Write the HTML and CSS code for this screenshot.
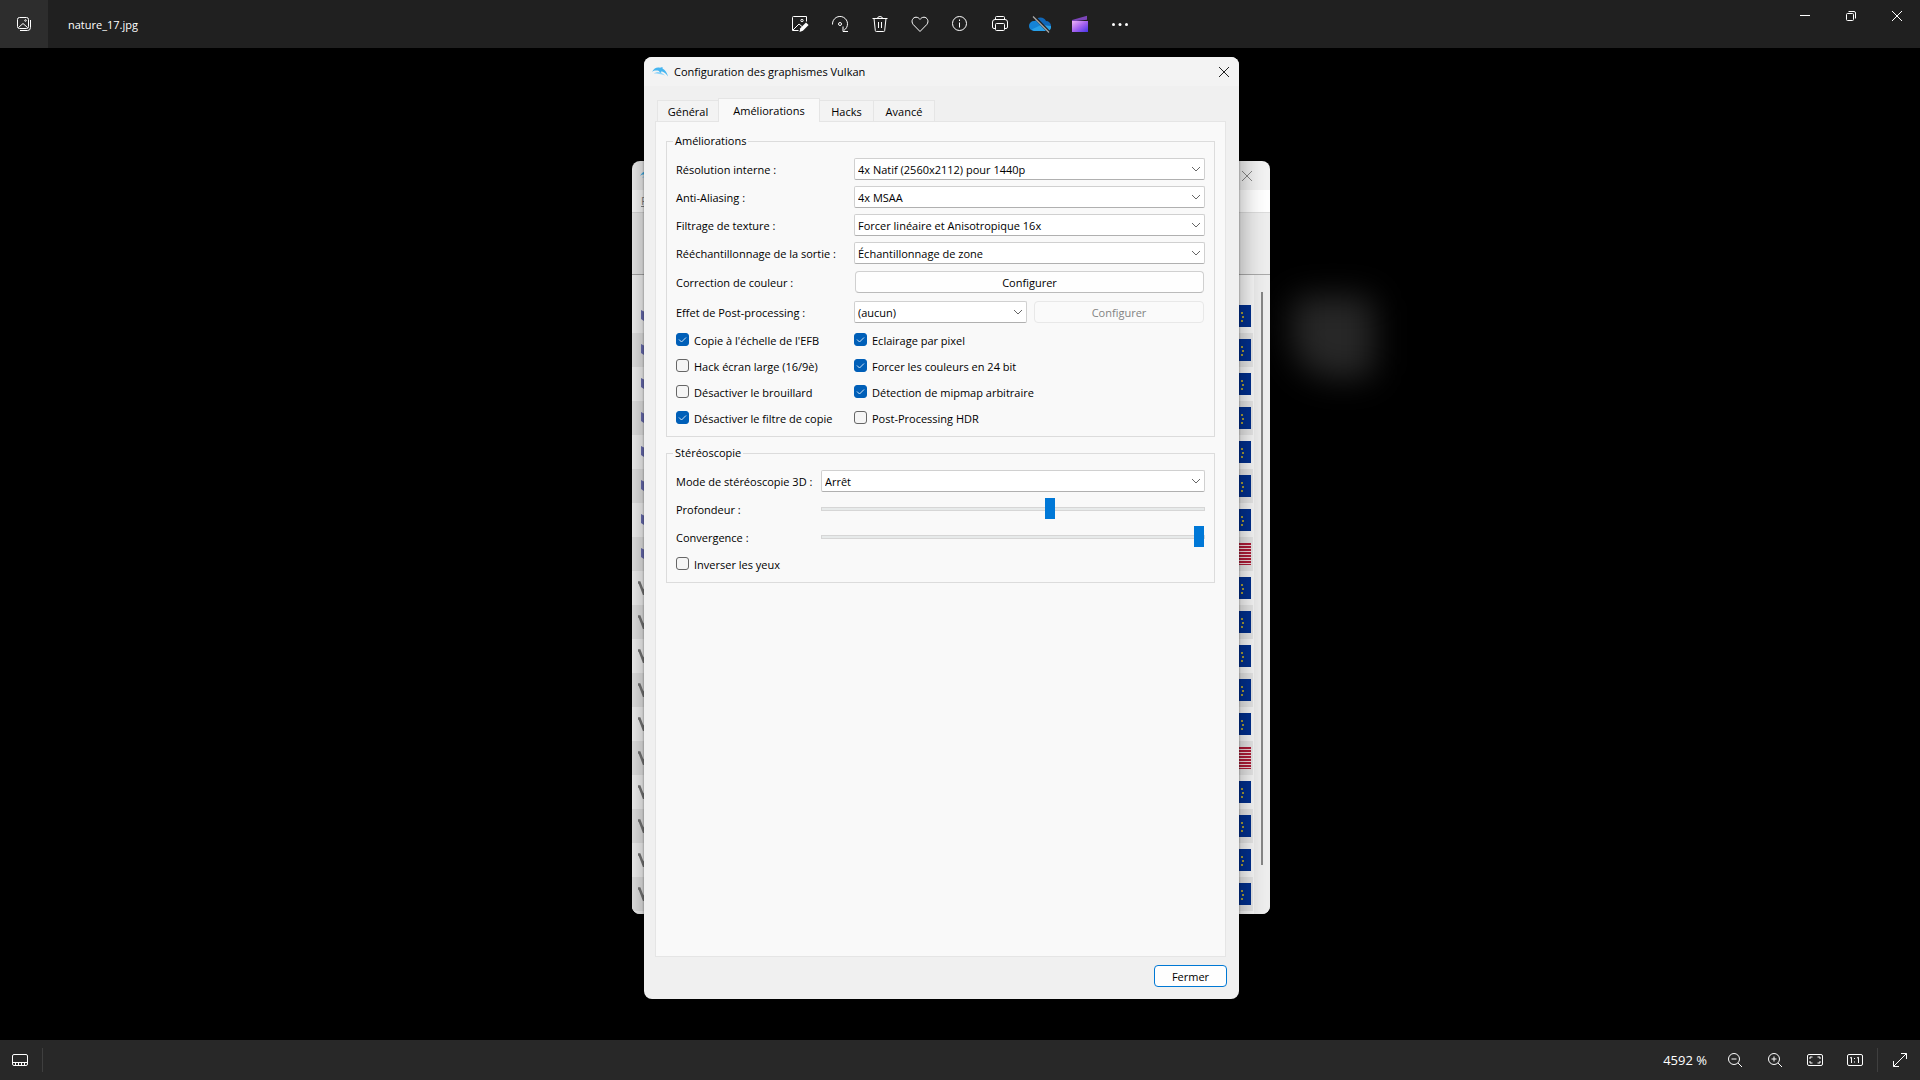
FILE: index.html
```
<!DOCTYPE html>
<html lang="fr">
<head>
  <meta charset="UTF-8">
  <meta name="viewport" content="width=device-width, initial-scale=1.0">
  <title>nature_17.jpg</title>
  <link rel="stylesheet" href="styles.css">
</head>
<body>

  <!-- Barre du haut -->
  <header class="topbar">
    <div class="topbar-left">
      <button class="gallery-btn" aria-label="Galerie">
        <svg width="16" height="16" viewBox="0 0 16 16"><rect x="1.5" y="1.5" width="11" height="11" rx="2"/><path d="M4 14.5h7.5a3 3 0 0 0 3-3V4M2.5 11.5L7 7.5l4.5 4"/><circle cx="9.5" cy="4.5" r=".8"/></svg>
      </button>
      <span class="filename">nature_17.jpg</span>
    </div>
    <nav class="tools">
      <button aria-label="Modifier">
        <svg width="18" height="18" viewBox="0 0 18 18"><path d="M15.5 6.5v-5h-13a1 1 0 0 0-1 1v13h6M2 15l6-6 3 2.500"/><circle cx="11" cy="5.500" r="1.200"/><path class="solid" d="M8.500 17l.8-3.800L15 7.500l2.600 2.600-5.700 5.700z"/></svg>
      </button>
      <button aria-label="Rotation">
        <svg width="18" height="18" viewBox="0 0 18 18"><path d="M1.500 9.500V9a7.500 7.500 0 1 1 11.500 6.300M12 11.500V16.500h5"/><circle cx="9" cy="9" r="1.500"/></svg>
      </button>
      <button aria-label="Supprimer">
        <svg width="18" height="18" viewBox="0 0 18 18"><path d="M1.500 3.500h15M6.500 3.500a2.500 2 0 0 1 5 0M3 3.500l1.300 12a1 1 0 0 0 1 1h7.400a1 1 0 0 0 1-1L15 3.500M7.500 7v6M10.500 7v6"/></svg>
      </button>
      <button aria-label="Favori">
        <svg width="18" height="18" viewBox="0 0 18 18"><path d="M9 16.500L2.200 9.500C-.5 6 2 2.200 5 2.200c2 0 3 1 4 2.200 1-1.200 2-2.200 4-2.200 3 0 5.500 3.800 2.800 7.300z"/></svg>
      </button>
      <button aria-label="Informations">
        <svg width="18" height="18" viewBox="0 0 18 18"><circle cx="8.500" cy="8.500" r="7"/><path d="M8.500 7.500v5M8.500 4.500V6"/></svg>
      </button>
      <button aria-label="Imprimer">
        <svg width="18" height="18" viewBox="0 0 18 18"><path d="M4.500 4.500v-2a1 1 0 0 1 1-1h7a1 1 0 0 1 1 1v2M4 13.500H3a1.500 1.500 0 0 1-1.500-1.500V7A2.500 2.500 0 0 1 4 4.500h10A2.500 2.500 0 0 1 16.500 7v5a1.500 1.500 0 0 1-1.500 1.500h-1"/><rect x="4.500" y="8.500" width="9" height="7" rx="1"/></svg>
      </button>
      <button aria-label="OneDrive">
        <svg class="color" width="22" height="18" viewBox="0 0 22 18"><path fill="#1067b8" d="M6 6a6 6 0 0 1 11 0 5 5 0 0 1 5 5l-10 2z"/><path fill="#1583d6" d="M5 16a5 5 0 0 1 0-10c2-.3 4 .5 5 1.500L14 12l-9 4z"/><path fill="#28a0e8" d="M2.500 14.500L12 10l10 1a4 4 0 0 1-4 5H5z"/><path stroke="#202020" stroke-width="3" d="M5 1.500L19.500 16.500"/><path stroke="#aaa" stroke-width="1.300" d="M4 1.500L20 17.500"/></svg>
      </button>
      <button aria-label="Clipchamp">
        <svg class="color" width="18" height="18" viewBox="0 0 18 18"><defs><linearGradient id="clip" x2="1" y2="1"><stop stop-color="#efb5f5"/><stop offset=".5" stop-color="#a663ef"/><stop offset="1" stop-color="#4534e8"/></linearGradient></defs><path fill="#7b45b8" d="M1 5l15-4.200v4L1 6.500z"/><path fill="url(#clip)" d="M1 6h16v11H1z"/></svg>
      </button>
      <button aria-label="Plus">
        <svg width="18" height="18" viewBox="0 0 18 18"><circle class="solid" cx="2.500" cy="9.500" r="1.500"/><circle class="solid" cx="9" cy="9.500" r="1.500"/><circle class="solid" cx="15.500" cy="9.500" r="1.500"/></svg>
      </button>
    </nav>
    <div class="window-controls">
      <button aria-label="Réduire"><svg width="12" height="12" viewBox="0 0 12 12"><path d="M1 5.500h10"/></svg></button>
      <button aria-label="Restaurer"><svg width="12" height="12" viewBox="0 0 12 12"><rect x="1.500" y="3.500" width="7" height="7" rx="1"/><path d="M3.500 1.500H9a1.500 1.500 0 0 1 1.500 1.500v5.500"/></svg></button>
      <button aria-label="Fermer la fenêtre"><svg width="12" height="12" viewBox="0 0 12 12"><path d="M1 1l10 10M11 1L1 11"/></svg></button>
    </div>
  </header>

  <main class="stage">

    <!-- Liste des jeux, derrière -->
    <section class="window back">
      <div class="back-title">
        <svg class="dolphin" width="16" height="10" viewBox="0 0 16 10"><use href="#dolphin"/></svg>
        <svg class="back-close" width="12" height="12" viewBox="0 0 12 12"><path d="M1 1l10 10M11 1L1 11"/></svg>
      </div>
      <div class="back-menu"><u>F</u></div>
      <div class="back-tools"></div>
      <div class="back-list">
        <table class="games" id="games"></table>
        <div class="scroll"></div>
      </div>
    </section>

    <!-- Configuration graphique -->
    <section class="window dialog">
      <div class="dialog-title">
        <svg class="dolphin" width="16" height="10" viewBox="0 0 16 10"><g id="dolphin"><path fill="#45b5f0" d="M0 5C2 1 5 0 8 .8L10.500 0v1.500C13 3 15 5.500 16 9.500 14 6.500 12 4.800 9.500 4.200L8.500 7 7 4C4 3.200 2 3.500 0 5z"/><path fill="#8ed4fa" d="M2 6.500c3-2.500 7-2 11 2C9 7 5 6.500 2 6.500z"/></g></svg>
        <h1>Configuration des graphismes Vulkan</h1>
        <button class="dialog-close" aria-label="Fermer le dialogue"><svg width="12" height="12" viewBox="0 0 12 12"><path d="M1 1l10 10M11 1L1 11"/></svg></button>
      </div>
      <div class="tabs">
        <button class="tab">Général</button>
        <button class="tab active">Améliorations</button>
        <button class="tab">Hacks</button>
        <button class="tab">Avancé</button>
      </div>
      <div class="pane">
        <fieldset>
          <legend>Améliorations</legend>
          <div class="rows">
            <label for="res">Résolution interne :</label>
            <select id="res"><option>4x Natif (2560x2112) pour 1440p</option></select>
            <label for="aa">Anti-Aliasing :</label>
            <select id="aa"><option>4x MSAA</option></select>
            <label for="filter">Filtrage de texture :</label>
            <select id="filter"><option>Forcer linéaire et Anisotropique 16x</option></select>
            <label for="resample">Rééchantillonnage de la sortie :</label>
            <select id="resample"><option>Échantillonnage de zone</option></select>
            <label class="tall" for="color">Correction de couleur :</label>
            <button class="btn wide" id="color">Configurer</button>
            <label class="tall" for="post">Effet de Post-processing :</label>
            <div class="pair">
              <select id="post"><option>(aucun)</option></select>
              <button class="btn" disabled>Configurer</button>
            </div>
          </div>
          <div class="checks">
            <label><input type="checkbox" checked>Copie à l'échelle de l'EFB</label>
            <label><input type="checkbox" checked>Eclairage par pixel</label>
            <label><input type="checkbox">Hack écran large (16/9è)</label>
            <label><input type="checkbox" checked>Forcer les couleurs en 24 bit</label>
            <label><input type="checkbox">Désactiver le brouillard</label>
            <label><input type="checkbox" checked>Détection de mipmap arbitraire</label>
            <label><input type="checkbox" checked>Désactiver le filtre de copie</label>
            <label><input type="checkbox">Post-Processing HDR</label>
          </div>
        </fieldset>
        <fieldset>
          <legend>Stéréoscopie</legend>
          <div class="rows stereo">
            <label for="mode">Mode de stéréoscopie 3D :</label>
            <select id="mode"><option>Arrêt</option></select>
            <label for="depth">Profondeur :</label>
            <input type="range" id="depth" min="0" max="100" value="60">
            <label for="conv">Convergence :</label>
            <input type="range" id="conv" min="0" max="100" value="100">
            <label class="invert"><input type="checkbox">Inverser les yeux</label>
          </div>
        </fieldset>
      </div>
      <div class="dialog-footer">
        <button class="btn primary">Fermer</button>
      </div>
    </section>
  </main>

  <!-- Barre du bas -->
  <footer class="bottombar">
    <button aria-label="Pellicule">
      <svg width="18" height="14" viewBox="0 0 18 14"><rect x="1.500" y="1.500" width="15" height="11" rx="1.500"/><path d="M1.500 9.500h15M4.500 10v2M7.500 10v2M10.500 10v2M13.500 10v2"/></svg>
    </button>
    <span class="sep"></span>
    <span class="zoom">4592 %</span>
    <button aria-label="Zoom arrière"><svg width="16" height="16" viewBox="0 0 16 16"><circle cx="7" cy="7" r="5.500"/><path d="M4.500 7h5M11 11l4 4"/></svg></button>
    <button aria-label="Zoom avant"><svg width="16" height="16" viewBox="0 0 16 16"><circle cx="7" cy="7" r="5.500"/><path d="M4.500 7h5M7 4.500v5M11 11l4 4"/></svg></button>
    <button aria-label="Ajuster"><svg width="18" height="14" viewBox="0 0 18 14"><rect x="1.500" y="1.500" width="15" height="11" rx="1.500"/><path d="M4 6V4h2.500M11.500 4H14v2M14 8v2h-2.500M6.500 10H4V8"/></svg></button>
    <button aria-label="Taille réelle"><svg width="18" height="14" viewBox="0 0 18 14"><rect x="1.500" y="1.500" width="15" height="11" rx="1.500"/><path d="M4 5l1.500-.7V10M11 5l1.500-.7V10M8.500 5v1M8.500 8.500v1"/></svg></button>
    <span class="sep"></span>
    <button class="full" aria-label="Plein écran"><svg width="16" height="16" viewBox="0 0 16 16"><path d="M1.500 14.500l13-13M9 1.500h5.500V7M1.500 9v5.500H7"/></svg></button>
  </footer>

  <script src="games.js"></script>
</body>
</html>
```
FILE: games.js
```
// w = Wii, g = GameCube ; les lignes 8 et 14 sont des jeux US
const games = document.getElementById('games');
const cube = '<svg width="12" height="14" viewBox="0 0 12 14"><path fill="#6b6fb5" d="M0 1l6 3 6-3v9l-6 4-6-4z"/></svg>';
const wii = '<svg width="24" height="14" viewBox="0 0 24 14"><path fill="none" stroke="#777" stroke-width="2.500" d="M0 1.500h1.500l4 10.500 4-10.500 4 10.500 4-10.500"/></svg>';

for (let i = 1; i <= 18; i++) {
  const row = games.insertRow();
  const type = row.insertCell();
  type.className = i <= 8 ? 'type g' : 'type w';
  type.innerHTML = i <= 8 ? cube : wii;
  const region = row.insertCell();
  region.className = 'region';
  region.innerHTML = `<span class="flag ${i === 8 || i === 14 ? 'us' : 'eu'}"></span>`;
}
```
FILE: styles.css
```
* {
  box-sizing: border-box;
  margin: 0;
  padding: 0;
}
body {
  height: 100vh;
  display: grid;
  grid-template-rows: 48px 1fr 40px;
  overflow: hidden;
  background: #000;
  color: #000;
  font-family: "Open Sans", "Noto Sans", sans-serif;
  font-size: 11px;
}
button, select, input { font: inherit; color: inherit; }
button { border: none; background: none; }
svg { display: block; fill: none; stroke: currentColor; }
svg .solid { fill: currentColor; stroke: none; }
svg.color { stroke: none; }

/* barre du haut */
.topbar { display: grid; grid-template-columns: 1fr auto 1fr; background: #202020; color: #fff; }
.topbar button, .bottombar button { display: flex; align-items: center; justify-content: center; }
.topbar-left { display: flex; align-items: center; gap: 20px; }
.gallery-btn { width: 48px; height: 48px; background: #2d2d2d; }
.tools { display: flex; }
.tools button { width: 40px; height: 48px; }
.window-controls { display: flex; justify-content: flex-end; }
.window-controls button { width: 46px; height: 32px; }

/* zone de travail */
.stage { position: relative; overflow: hidden; }
.stage::before { content: ""; position: absolute; left: 1292px; top: 248px; width: 82px; height: 82px; border-radius: 12px 12px 12px 40px; background: #272727; filter: blur(16px); }
.window { position: absolute; display: flex; flex-direction: column; border-radius: 8px; overflow: hidden; }
.dolphin { stroke: none; }

.back { inset: 113px 650px 126px 632px; background: #f3f3f3; }
.back-title { height: 29px; display: flex; align-items: center; justify-content: space-between; padding: 0 17px 0 8px; color: #888; flex: none; }
.back-menu { height: 23px; flex: none; padding: 3px 9px; background: #fff; color: #888; border-bottom: 1px solid #ddd; }
.back-tools { height: 62px; flex: none; background: #eee; border-bottom: 1px solid #aaa; }
.back-list { flex: 1; display: flex; justify-content: space-between; padding-right: 7px; overflow: hidden; background: linear-gradient(to left, #eee 16px, #f8f8f8 16px); }
.games { flex: 1; align-self: flex-start; margin-top: 24px; margin-right: 8px; border-collapse: collapse; }
.games tr { height: 34px; }
.games tr:nth-child(even) { background: #e8e8e8; }
.games td { vertical-align: middle; }
.games svg { stroke: none; }
.type.g { padding-left: 9px; }
.type.w { padding-left: 6px; }
.region { text-align: right; padding-right: 2px; }
.flag { display: inline-block; vertical-align: middle; width: 33px; height: 22px; }
.flag.eu { background: linear-gradient(#a69c3c, #a69c3c) 23px 7px / 2px 2px no-repeat, linear-gradient(#a69c3c, #a69c3c) 24px 11px / 2px 2px no-repeat, linear-gradient(#a69c3c, #a69c3c) 23px 15px / 2px 2px no-repeat, #002f8e; }
.flag.us { background: repeating-linear-gradient(#b01c38 0 2px, #f0d8dc 2px 3px); }
.scroll { width: 2px; margin: 17px 0 49px; background: #868686; }

/* boîte de dialogue */
.dialog { inset: 9px 681px 41px 644px; background: #f0f0f0; box-shadow: 0 8px 28px rgba(0, 0, 0, .4), 0 0 2px rgba(0, 0, 0, .5); }
.dialog-title { height: 29px; display: flex; align-items: center; gap: 6px; padding-left: 8px; background: #f3f3f3; }
.dialog-title h1 { flex: 1; font-size: 11px; font-weight: normal; }
.dialog-close { width: 30px; height: 29px; display: flex; align-items: center; justify-content: center; color: #222; }
.tabs { display: flex; align-items: flex-end; height: 35px; padding-left: 13px; }
.tab { height: 21px; min-width: 61px; background: #f3f3f3; border: 1px solid #e5e5e5; border-bottom: none; border-left: none; }
.tab:first-child { border-left: 1px solid #e5e5e5; border-right: none; }
.tab.active { height: 24px; min-width: 102px; margin-bottom: -1px; z-index: 1; background: #f9f9f9; border-left: 1px solid #e5e5e5; }
.tab:nth-child(3) { min-width: 54px; }
.pane { flex: 1; margin: 0 13px 0 11px; padding: 11px 10px; background: #f9f9f9; border: 1px solid #e5e5e5; }
fieldset { border: 1px solid #dcdcdc; padding: 9px 9px 5px; margin-bottom: 8px; }
legend { height: 16px; line-height: 16px; padding: 0 2px; margin-left: -3px; }

.rows { display: grid; grid-template-columns: 178px 1fr; gap: 6px 0; }
.rows > label { display: flex; align-items: center; height: 22px; padding-top: 1px; }
.rows > .tall { height: 24px; }
.rows.stereo { grid-template-columns: 145px 1fr; }
select { height: 22px; width: 100%; min-width: 0; padding: 0 3px; border: 1px solid #d0d0d0; border-bottom-color: #b0b0b0; border-radius: 2px; appearance: none; background: #fff url("data:image/svg+xml,%3Csvg xmlns='http://www.w3.org/2000/svg' width='10' height='6'%3E%3Cpath d='M1 1l4 4 4-4' fill='none' stroke='%23666'/%3E%3C/svg%3E") no-repeat right 3px center; }
.btn { height: 22px; background: #fefefe; border: 1px solid #d0d0d0; border-bottom-color: #bbb; border-radius: 4px; }
.btn:disabled { background: #fafafa; border-color: #e8e8e8; color: #838383; }
.btn.wide { margin: 1px; }
.pair { display: grid; grid-template-columns: 173px 1fr; gap: 7px; align-items: center; padding-right: 1px; }

.checks { display: grid; grid-template-columns: 178px 1fr; margin-top: 3px; }
.checks label { display: flex; align-items: center; gap: 5px; height: 26px; }
input[type="checkbox"] { appearance: none; width: 13px; height: 13px; margin-bottom: 1px; background: #f5f5f5; border: 1px solid #666; border-radius: 3px; }
input[type="checkbox"]:checked { border-color: #005fb8; background: #005fb8 url("data:image/svg+xml,%3Csvg xmlns='http://www.w3.org/2000/svg' width='9' height='7'%3E%3Cpath d='M1 3.500l2.500 2.500L8 1.500' fill='none' stroke='%23cfe3f5'/%3E%3C/svg%3E") no-repeat center; }
.rows > .invert { grid-column: 1 / 3; height: 20px; padding: 0; gap: 5px; margin-bottom: 3px; }

input[type="range"] { appearance: none; width: 100%; height: 22px; background: none; }
input[type="range"]::-webkit-slider-runnable-track { height: 4px; background: #e7eaea; border: 1px solid #d6d6d6; }
input[type="range"]::-webkit-slider-thumb { appearance: none; width: 10px; height: 21px; margin-top: -10px; background: #0078d7; }

.dialog-footer { display: flex; justify-content: flex-end; padding: 8px 12px 12px; }
.primary { width: 73px; border: 1px solid #0078d4; }

/* barre du bas */
.bottombar { display: flex; align-items: center; background: #282828; color: #fff; }
.bottombar button { width: 40px; height: 40px; }
.sep { width: 1px; height: 24px; margin: 0 2px; background: #3f3f3f; }
.zoom { margin-left: auto; margin-right: 8px; font-size: 13px; }
```
